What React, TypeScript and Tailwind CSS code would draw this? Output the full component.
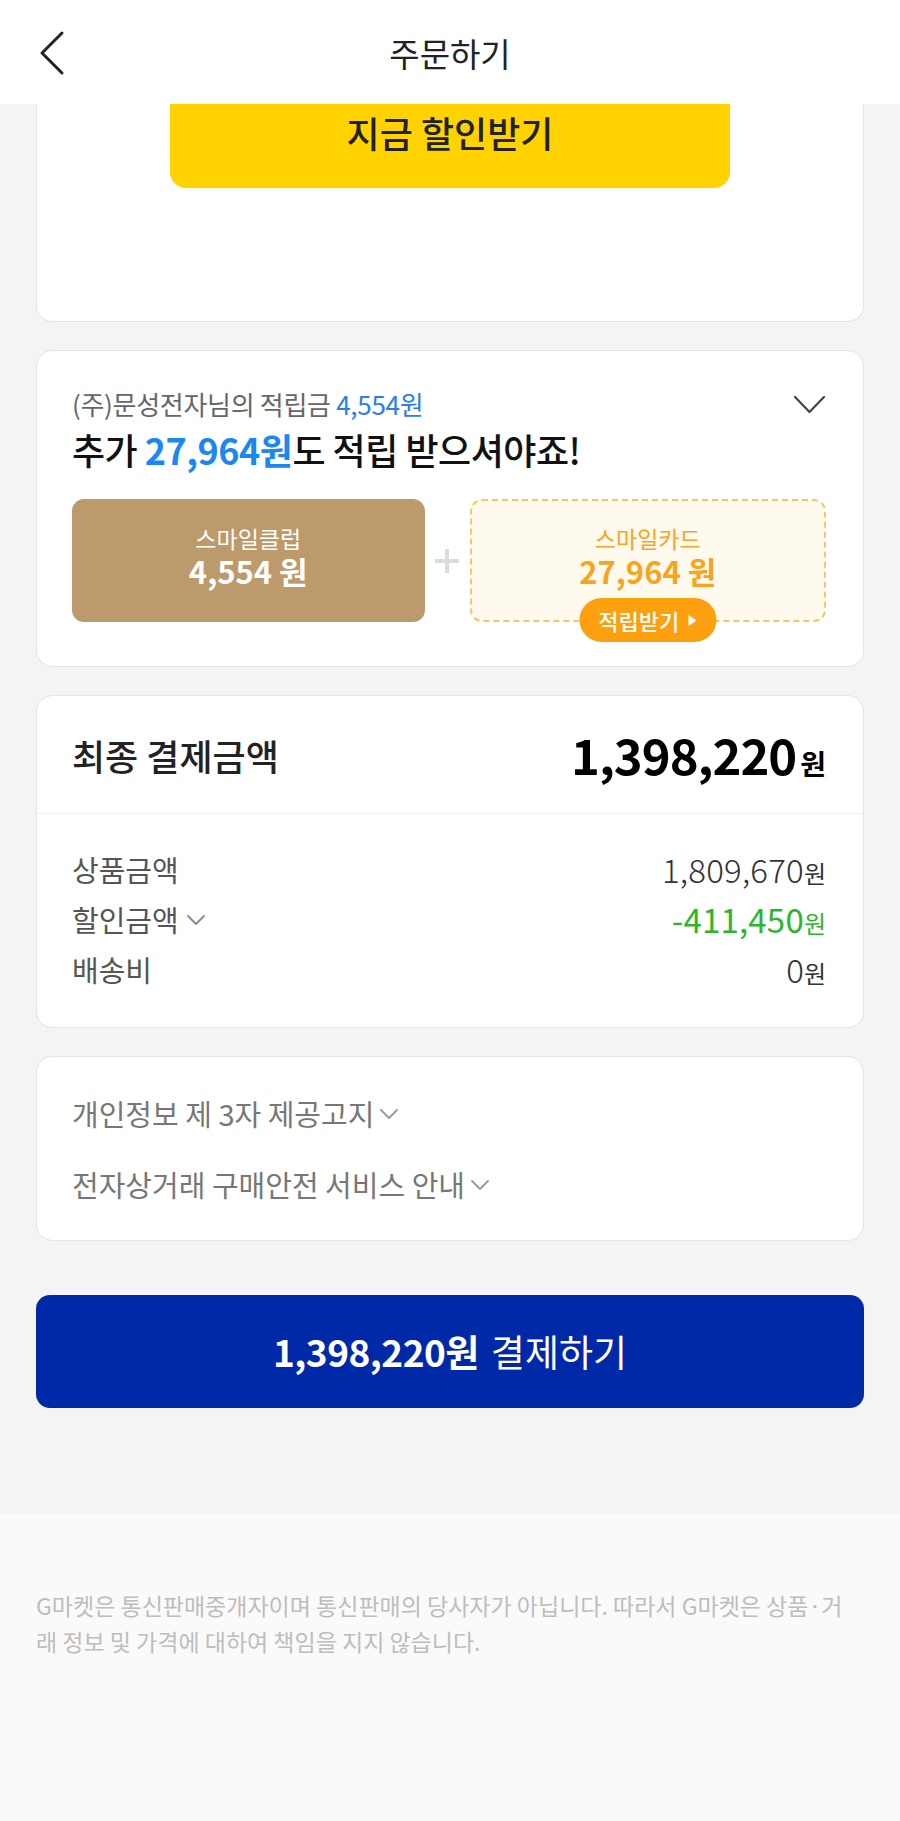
import React from "react";

function Chevron({ className, color = "#888", w = 16, h = 10, sw = 1.6 }: { className?: string; color?: string; w?: number; h?: number; sw?: number }) {
  return (
    <svg className={className} width={w} height={h} viewBox={`0 0 ${w} ${h}`} fill="none">
      <polyline points={`1,1 ${w / 2},${h - 1} ${w - 1},1`} stroke={color} strokeWidth={sw} strokeLinecap="round" strokeLinejoin="round" />
    </svg>
  );
}

export default function App() {
  return (
    <div className="w-[900px] min-h-[1821px] bg-[#fafafa] font-['Noto_Sans_CJK_KR',sans-serif]">
      <header className="relative h-[104px] bg-white flex items-center justify-center">
        <svg className="absolute left-[36px] top-[28px]" width="34" height="50" viewBox="0 0 34 50" fill="none">
          <polyline points="26,5 6,25 26,45" stroke="#222" strokeWidth="3" strokeLinecap="round" strokeLinejoin="round" />
        </svg>
        <h1 className="text-[33px] leading-[42px] text-[#222] mt-[2px]">주문하기</h1>
      </header>

      <main className="bg-[#f4f4f4] px-[36px] pb-[105px]">
        {/* partial card */}
        <div className="h-[218px] bg-white rounded-b-[16px] border border-t-0 border-[#e4e4e4]">
          <div className="mx-auto w-[560px] h-[84px] bg-[#ffd200] rounded-b-[16px] flex justify-center pt-[6px]">
            <span className="text-[36px] leading-[44px] font-medium text-[#222]">지금 할인받기</span>
          </div>
        </div>

        {/* reward card */}
        <div className="mt-[28px] h-[317px] bg-white rounded-[16px] border border-[#e4e4e4] pl-[35px] pr-[37px] pt-[36px]">
          <div className="flex items-center justify-between h-[34px]">
            <p className="text-[26px] leading-[34px] text-[#666] tracking-[-0.3px]">
              (주)문성전자님의 적립금 <span className="text-[#2b7de9]">4,554원</span>
            </p>
            <Chevron className="mr-[1px]" color="#444" w={31} h={17} sw={2.2} />
          </div>
          <p className="mt-[5px] text-[36px] leading-[46px] font-medium text-[#111] tracking-[-0.5px]">
            추가 <span className="font-bold text-[#1b87f2]">27,964원</span>도 적립 받으셔야죠!
          </p>
          <div className="mt-[27px] flex h-[123px]">
            <div className="flex-1 rounded-[12px] bg-[#bc9a6b] flex flex-col items-center justify-center pb-[10px] text-white">
              <span className="text-[23px] leading-[30px]">스마일클럽</span>
              <span className="text-[31px] leading-[36px] font-bold">4,554 원</span>
            </div>
            <div className="w-[45px] flex items-center justify-center">
              <svg width="28" height="28" viewBox="0 0 28 28">
                <path d="M14 2 V26 M2 14 H26" stroke="#dcdcdc" strokeWidth="4" />
              </svg>
            </div>
            <div className="relative flex-1 rounded-[12px] border-2 border-dashed border-[#efca6a] bg-[#fff9ee] flex flex-col items-center justify-center pb-[10px] text-[#f5a51f]">
              <span className="text-[23px] leading-[30px]">스마일카드</span>
              <span className="text-[31px] leading-[36px] font-bold">27,964 원</span>
              <div className="absolute left-1/2 bottom-0 -translate-x-1/2 translate-y-1/2 w-[137px] h-[44px] rounded-full bg-[#fca010] flex items-center justify-center gap-[8px] text-white">
                <span className="text-[22px] leading-[28px] font-medium">적립받기</span>
                <svg width="10" height="13" viewBox="0 0 10 13">
                  <path d="M1 1 L9 6.5 L1 12 Z" fill="#fff" />
                </svg>
              </div>
            </div>
          </div>
        </div>

        {/* total card */}
        <div className="mt-[28px] bg-white rounded-[16px] border border-[#e4e4e4]">
          <div className="h-[118px] flex items-center justify-between pl-[35px] pr-[37px] border-b border-[#eeeeee]">
            <span className="text-[36px] leading-[44px] font-medium text-[#222]">최종 결제금액</span>
            <span className="flex items-baseline text-black">
              <span className="text-[49px] leading-[56px] font-bold tracking-[-1px]">1,398,220</span>
              <span className="ml-[4px] text-[28px] font-bold">원</span>
            </span>
          </div>
          <div className="pl-[35px] pr-[37px] pt-[31px] pb-[32px]">
            <div className="h-[50px] flex items-center justify-between">
              <span className="text-[29px] text-[#555]">상품금액</span>
              <span className="flex items-baseline text-[#333]">
                <span className="text-[33px] font-light tracking-[0.2px]">1,809,670</span>
                <span className="text-[24px]">원</span>
              </span>
            </div>
            <div className="h-[50px] flex items-center justify-between">
              <span className="flex items-center gap-[8px]">
                <span className="text-[29px] text-[#555]">할인금액</span>
                <Chevron color="#888" w={18} h={10} sw={1.8} />
              </span>
              <span className="flex items-baseline text-[#2eb52e]">
                <span className="text-[33px] tracking-[0.2px]">-411,450</span>
                <span className="text-[24px]">원</span>
              </span>
            </div>
            <div className="h-[50px] flex items-center justify-between">
              <span className="text-[29px] text-[#555]">배송비</span>
              <span className="flex items-baseline text-[#333]">
                <span className="text-[33px] font-light">0</span>
                <span className="text-[24px]">원</span>
              </span>
            </div>
          </div>
        </div>

        {/* notice card */}
        <div className="mt-[28px] h-[185px] bg-white rounded-[16px] border border-[#e4e4e4] pl-[35px] pr-[37px] pt-[37px] flex flex-col gap-[31px]">
          <div className="h-[40px] flex items-center gap-[6px]">
            <span className="text-[29px] text-[#777]">개인정보 제 3자 제공고지</span>
            <Chevron color="#999" w={18} h={10} sw={1.8} />
          </div>
          <div className="h-[40px] flex items-center gap-[6px]">
            <span className="text-[29px] text-[#777]">전자상거래 구매안전 서비스 안내</span>
            <Chevron color="#999" w={18} h={10} sw={1.8} />
          </div>
        </div>

        <button className="mt-[54px] w-full h-[113px] rounded-[14px] bg-[#0029a8] flex items-center justify-center text-white">
          <span className="text-[37px] font-bold tracking-[-0.5px]">1,398,220원</span>
          <span className="ml-[12px] text-[37px]">결제하기</span>
        </button>
      </main>

      <footer className="bg-[#fafafa] pl-[36px] pr-[44px] pt-[74px] pb-[100px]">
        <p className="text-[23px] leading-[36px] text-[#bdbdbd] break-all">
          G마켓은 통신판매중개자이며 통신판매의 당사자가 아닙니다. 따라서 G마켓은 상품·거래 정보 및 가격에 대하여 책임을 지지 않습니다.
        </p>
      </footer>
    </div>
  );
}
